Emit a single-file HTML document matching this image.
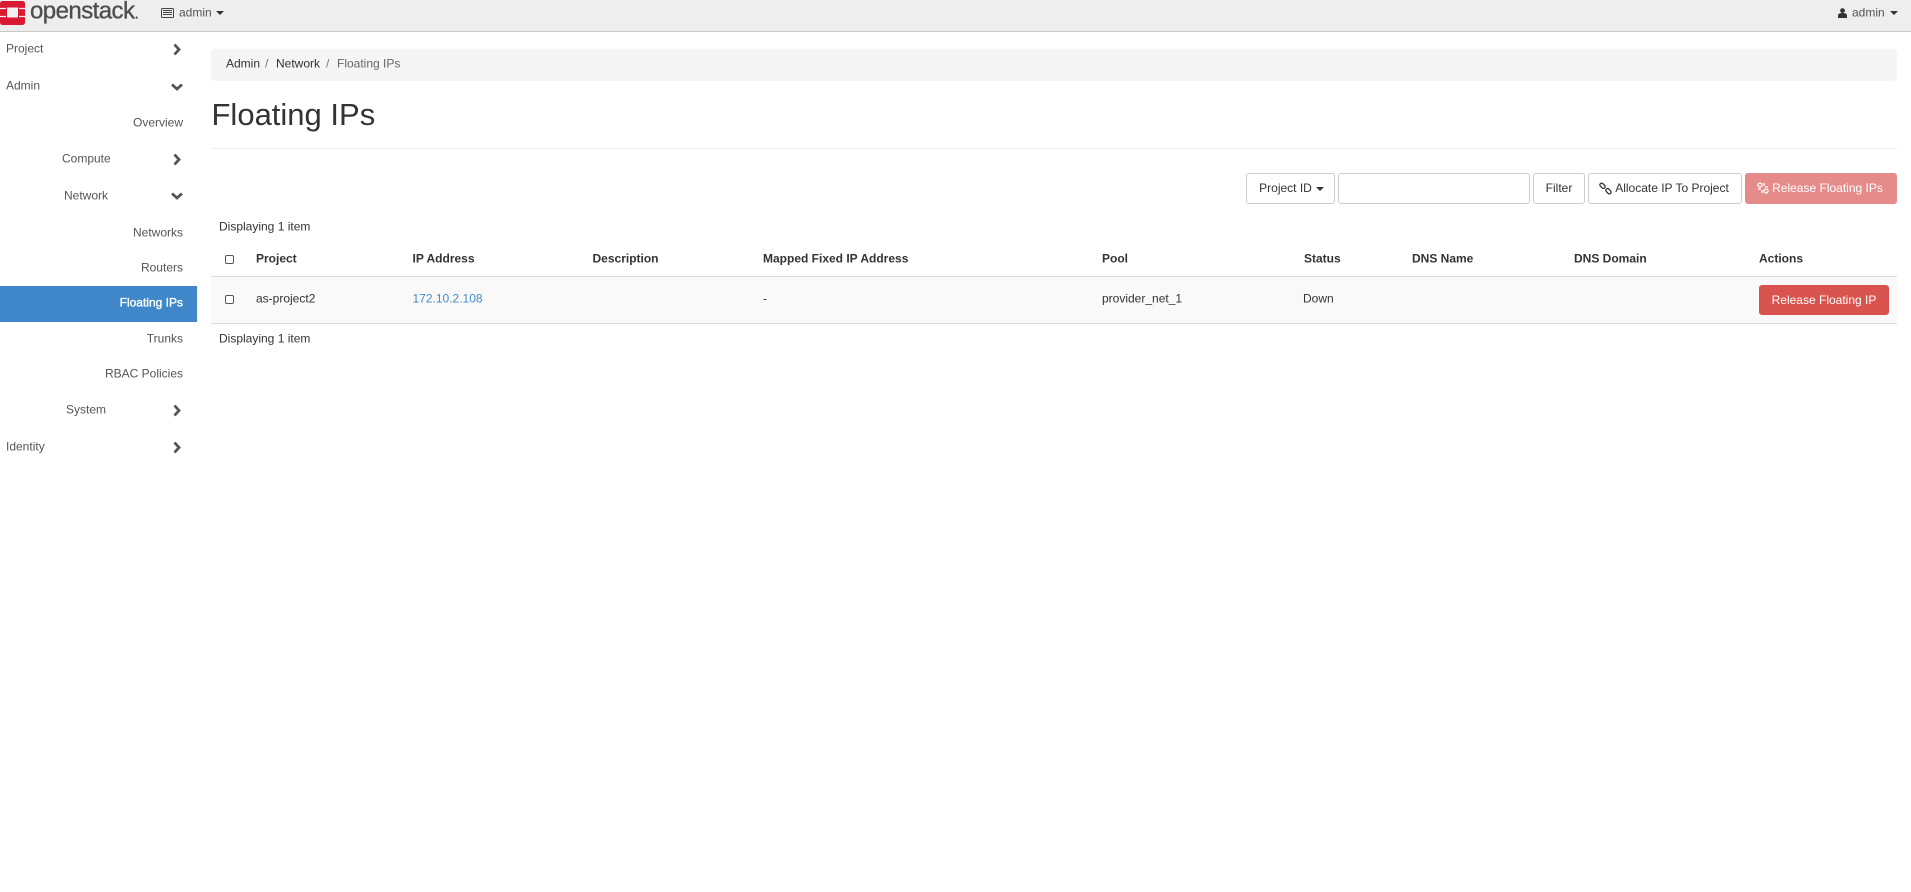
<!DOCTYPE html>
<html lang="en"><head><meta charset="utf-8"><title>Floating IPs</title>
<style>
html,body{margin:0;padding:0;background:#fff;width:1911px;height:892px;overflow:hidden}
body{position:relative;font:12px/17px "Liberation Sans",Arial,sans-serif;color:#333}
.a{position:absolute;white-space:nowrap}
.c{transform:translateY(-50%)}
.s{color:#555}
.r{right:1728px}
b{font-weight:700;color:#333}
.btn{position:absolute;top:173px;height:31px;box-sizing:border-box;border:1px solid #ccc;border-radius:3px;background:#fff;line-height:29px;text-align:center;white-space:nowrap;color:#333}
.cb{position:absolute;width:7px;height:7px;border:1px solid #555;border-radius:2px;background:#fff}
svg{position:absolute;overflow:visible}
</style></head><body>
<div class="a" style="left:0;top:0;width:1911px;height:31px;background:#eee;border-bottom:1px solid #c8c8c8"></div>
<svg style="left:0;top:1px" width="26" height="24" viewBox="0 0 26 24"><rect width="25" height="24" rx="2.500" fill="#da1a32"/><rect x="7" y="6.500" width="11" height="10" fill="#f2f2f2"/><path d="M0 7.500H6M19 7.500H25M0 15.500H6M19 15.500H25" stroke="#f2f2f2" stroke-width="1.300"/></svg>
<div class="a c" style="left:30px;top:13px;font-size:24px;line-height:28px;letter-spacing:-.55px;color:#4e4e4e;-webkit-text-stroke:.35px #4e4e4e">openstack<span style="font-size:16px">.</span></div>
<svg style="left:161px;top:8px" width="13" height="10" viewBox="0 0 13 10"><rect x=".5" y=".5" width="12" height="9" rx="1" fill="none" stroke="#444"/><path d="M2 2.500H11M2 4.500H11M2 6.500H11" stroke="#444"/></svg>
<div class="a c s" style="left:179px;top:13px">admin</div>
<svg style="left:216px;top:11px" width="8" height="4"><path d="M0 0H8L4 4Z" fill="#333"/></svg>
<svg style="left:1838px;top:8px" width="9" height="10" viewBox="0 0 9 10"><circle cx="4.500" cy="2.600" r="2.400" fill="#333"/><path d="M0 10V7.500C0 5.500 2 5 4.500 5S9 5.500 9 7.500V10Z" fill="#333"/></svg>
<div class="a c s" style="left:1852px;top:13px">admin</div>
<svg style="left:1890px;top:11px" width="8" height="4"><path d="M0 0H8L4 4Z" fill="#333"/></svg>

<div class="a c s" style="left:6px;top:49px">Project</div>
<div class="a c s" style="left:6px;top:86px">Admin</div>
<div class="a c s r" style="top:123px">Overview</div>
<div class="a c s" style="left:62px;top:159px">Compute</div>
<div class="a c s" style="left:64px;top:196px">Network</div>
<div class="a c s r" style="top:233px">Networks</div>
<div class="a c s r" style="top:268px">Routers</div>
<div class="a" style="left:0;top:286px;width:197px;height:36px;background:#3f87c9"></div>
<div class="a c r" style="top:303px;color:#fff;-webkit-text-stroke:.35px #fff">Floating IPs</div>
<div class="a c s r" style="top:339px">Trunks</div>
<div class="a c s r" style="top:374px">RBAC Policies</div>
<div class="a c s" style="left:66px;top:410px">System</div>
<div class="a c s" style="left:6px;top:447px">Identity</div>
<svg style="left:0;top:0" width="200" height="460" fill="none" stroke="#555" stroke-width="2.800"><path d="M174.500 44.500L179 49.500 174.500 54.500M174.500 154.500L179 159.500 174.500 164.500M174.500 405.500L179 410.500 174.500 415.500M174.500 442.500L179 447.500 174.500 452.500M172 84.500L177 89 182 84.500M172 193.500L177 198 182 193.500"/></svg>

<div class="a" style="left:211px;top:49px;width:1686px;height:32px;background:#f5f5f5;border-radius:4px"></div>
<div class="a c" style="left:226px;top:64px">Admin</div><div class="a c" style="left:265px;top:64px;color:#777">/</div>
<div class="a c" style="left:276px;top:64px">Network</div><div class="a c" style="left:326px;top:64px;color:#777">/</div>
<div class="a c" style="left:337px;top:64px;color:#666">Floating IPs</div>
<div class="a c" style="left:211.500px;top:115px;font-size:31px;line-height:34px;color:#333">Floating IPs</div>
<div class="a" style="left:211px;top:148px;width:1686px;height:1px;background:#eee"></div>

<div class="btn" style="left:1246px;width:89px;padding-right:10px">Project ID</div>
<svg style="left:1316px;top:187px" width="8" height="4"><path d="M0 0H8L4 4Z" fill="#333"/></svg>
<div class="btn" style="left:1338px;width:192px"></div>
<div class="btn" style="left:1533px;width:52px">Filter</div>
<div class="btn" style="left:1588px;width:154px;padding-left:14px">Allocate IP To Project</div>
<svg style="left:1600px;top:183px" width="11" height="11" fill="none" stroke="#333" stroke-width="1.300"><rect x="-.5" y="1" width="6" height="3.500" rx="1.700" transform="rotate(45 2.500 2.800)"/><rect x="5.500" y="6.500" width="6" height="3.500" rx="1.700" transform="rotate(45 8.500 8.200)"/></svg>
<div class="btn" style="left:1745px;width:152px;padding-left:13px;background:#e58b8a;border-color:#e58b8a;color:#fff">Release Floating IPs</div>
<svg style="left:1757px;top:182px" width="12" height="12" fill="none" stroke="#fff" stroke-width="1.300"><circle cx="3" cy="3" r="2"/><circle cx="9" cy="9" r="2"/><path d="M7 1V4M1 7H4M5 11V8M11 5H8"/></svg>

<div class="a c" style="left:219px;top:227px">Displaying 1 item</div>
<div class="cb" style="left:225px;top:255px"></div>
<div class="a c" style="left:256px;top:259px"><b>Project</b></div>
<div class="a c" style="left:412.500px;top:259px"><b>IP Address</b></div>
<div class="a c" style="left:592.500px;top:259px"><b>Description</b></div>
<div class="a c" style="left:763px;top:259px"><b>Mapped Fixed IP Address</b></div>
<div class="a c" style="left:1102px;top:259px"><b>Pool</b></div>
<div class="a c" style="left:1304px;top:259px"><b>Status</b></div>
<div class="a c" style="left:1412px;top:259px"><b>DNS Name</b></div>
<div class="a c" style="left:1574px;top:259px"><b>DNS Domain</b></div>
<div class="a c" style="left:1759px;top:259px"><b>Actions</b></div>
<div class="a" style="left:211px;top:276px;width:1686px;height:46px;background:#f9f9f9;border-top:1px solid #ddd;border-bottom:1px solid #ddd"></div>
<div class="cb" style="left:225px;top:295px"></div>
<div class="a c" style="left:256px;top:299px">as-project2</div>
<div class="a c" style="left:412.500px;top:299px;color:#428bca">172.10.2.108</div>
<div class="a c" style="left:763px;top:299px">-</div>
<div class="a c" style="left:1102px;top:299px">provider_net_1</div>
<div class="a c" style="left:1303px;top:299px">Down</div>
<div class="a" style="left:1759px;top:285px;width:130px;height:30px;box-sizing:border-box;background:#d9534f;border:1px solid #d6504c;border-radius:3px;color:#fff;text-align:center;line-height:28px">Release Floating IP</div>
<div class="a c" style="left:219px;top:339px">Displaying 1 item</div>
</body></html>
